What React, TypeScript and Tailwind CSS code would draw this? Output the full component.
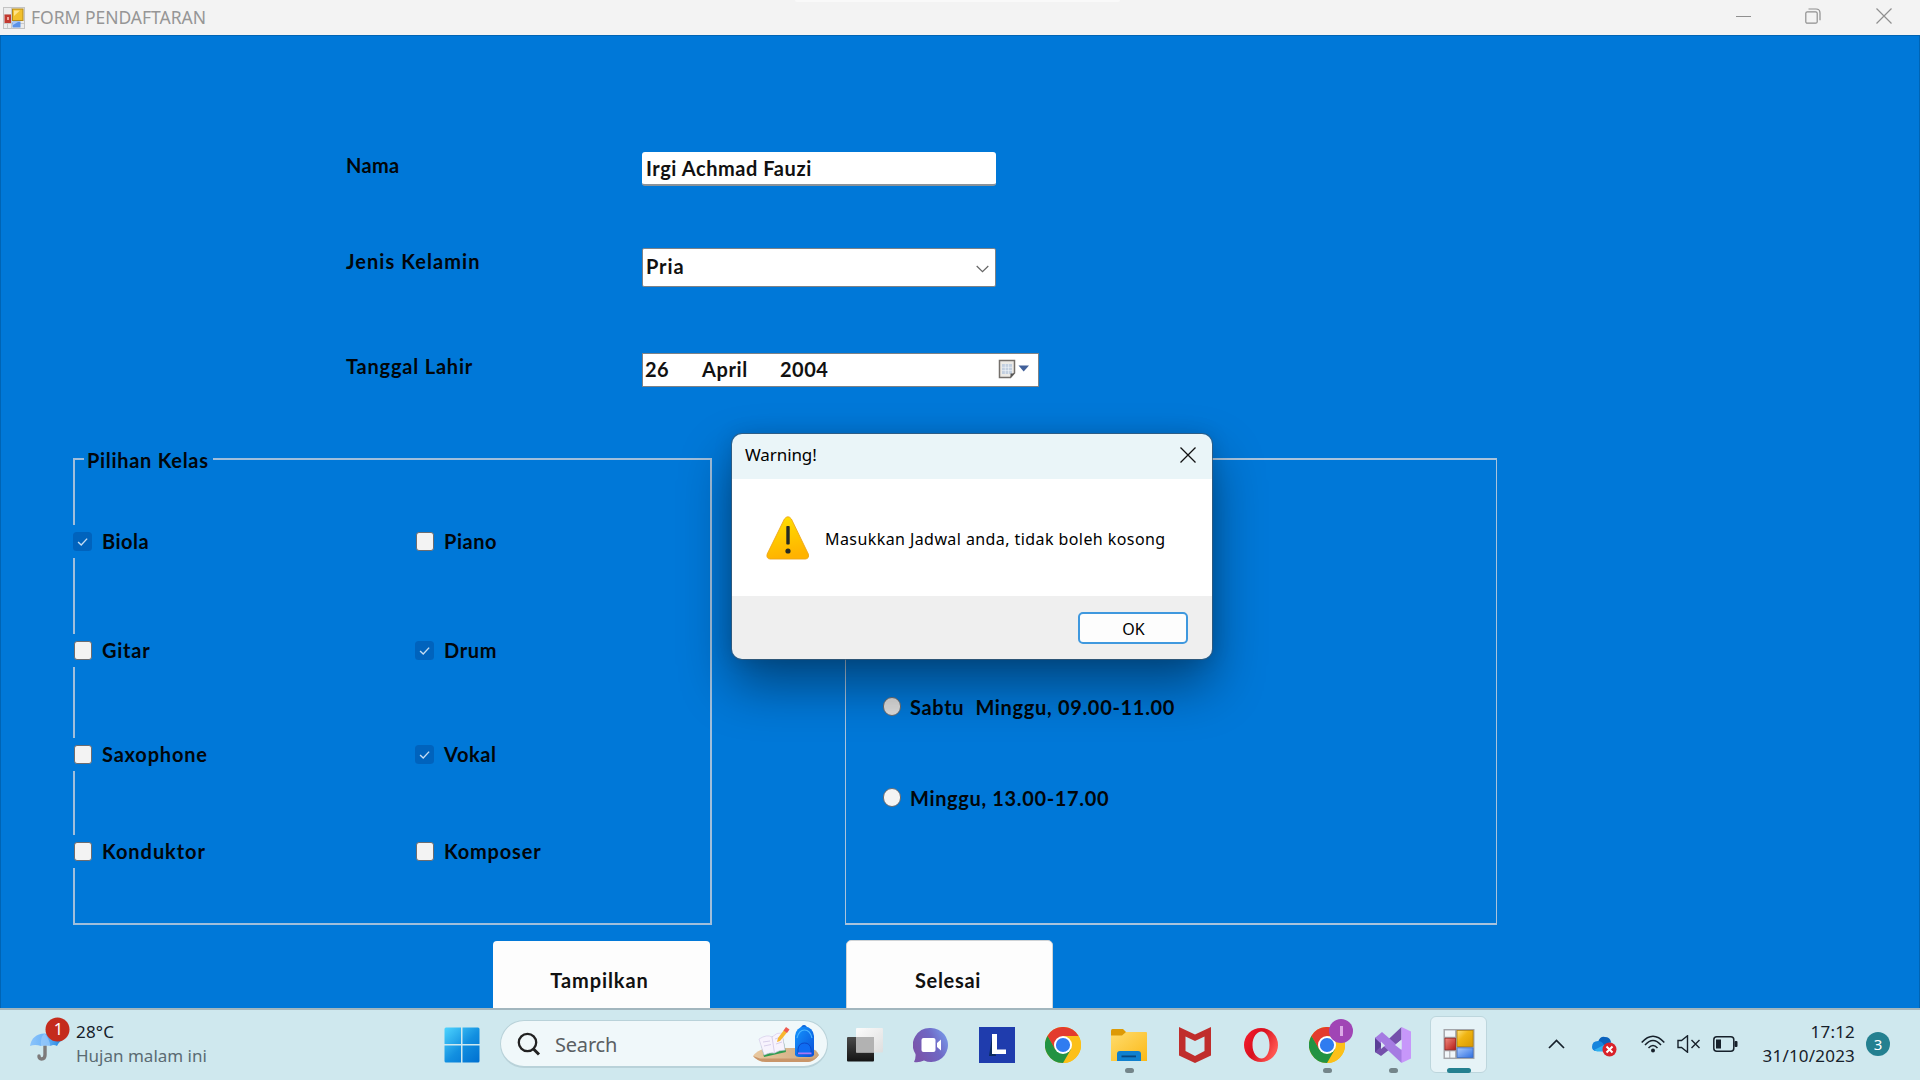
import type { ReactNode } from "react";

function FormsIcon({ className }: { className: string }) {
  return (
    <svg viewBox="0 0 32 32" className={className}>
      <defs>
        <linearGradient id="fy" x1="0" y1="0" x2="1" y2="1"><stop offset="0" stopColor="#ffe27a" /><stop offset="0.4" stopColor="#f0b512" /><stop offset="1" stopColor="#d99800" /></linearGradient>
        <linearGradient id="fr" x1="0" y1="0" x2="1" y2="1"><stop offset="0" stopColor="#f08a80" /><stop offset="1" stopColor="#b41a14" /></linearGradient>
        <linearGradient id="fb" x1="0" y1="0" x2="1" y2="1"><stop offset="0" stopColor="#a9cbff" /><stop offset="1" stopColor="#2f6fe0" /></linearGradient>
      </defs>
      <rect x="0" y="0" width="32" height="31" fill="#a3a5aa" />
      <rect x="1.5" y="1.5" width="10.5" height="6.5" fill="#f1f6f9" />
      <rect x="1.5" y="23" width="4.5" height="6.5" fill="#f1f6f9" />
      <rect x="7" y="23" width="5" height="6.5" fill="#f1f6f9" />
      <rect x="1.5" y="9.5" width="11" height="12" fill="url(#fr)" stroke="#9c2420" strokeWidth="0.8" />
      <rect x="14" y="1.5" width="16.5" height="16.5" fill="url(#fy)" stroke="#b88308" strokeWidth="0.8" />
      <rect x="14" y="19.5" width="16.5" height="10" fill="url(#fb)" stroke="#3c6cc0" strokeWidth="0.8" />
    </svg>
  );
}

function TitleIcon() {
  return (
    <svg viewBox="0 0 22 22" className="ml-[3px] size-[22px]">
      <rect x="0.5" y="0.5" width="21" height="21" fill="#ececec" stroke="#c3c3c3" />
      <path d="M8.500 1V21M1 8H8.500M1 16.500H21M4.500 16.500V21" stroke="#c9c9c9" />
      <rect x="1.500" y="7.500" width="6.500" height="8.500" fill="#c2392f" /><rect x="4" y="10" width="2" height="3" fill="#f0a79c" />
      <rect x="9.500" y="2" width="10.500" height="11.500" fill="#f2c02c" stroke="#b58a18" /><path d="M11 3.500H17L11 9Z" fill="#ffe48a" />
      <rect x="9.500" y="14.500" width="8" height="6" fill="#5b92e6" /><path d="M10 15H15L10 18Z" fill="#a9c9f7" />
    </svg>
  );
}

function Chrome() {
  return (
    <svg viewBox="0 0 36 36" className="size-9">
      <circle cx="18" cy="18" r="18" fill="#fbbc05" />
      <path d="M18 18 L2.4 9 A18 18 0 0 1 33.6 9 Z" fill="#e33b2e" />
      <path d="M18 9 H33.6 A18 18 0 0 1 18 36 L25.8 22.5 Z" fill="#fcc018" />
      <path d="M2.4 9 A18 18 0 0 0 18 36 L25.8 22.5 L18 18 L10.2 22.5 Z" fill="#229342" />
      <path d="M2.4 9 L10.2 22.5 L18 18 V9 Z" fill="#e33b2e" />
      <path d="M2.4 9 L10.2 22.5 L9 27 L2 18Z" fill="#229342" />
      <circle cx="18" cy="18" r="9" fill="#fff" />
      <circle cx="18" cy="18" r="7.1" fill="#2f7cf0" />
    </svg>
  );
}

function Check({ label, on, className }: { label: string; on?: boolean; className: string }) {
  return (
    <label className="flex h-[33px] items-center bg-[#0078d8]">
      {on ? (
        <svg viewBox="0 0 18 19" className="h-[19px] w-[19px]" preserveAspectRatio="none">
          <rect width="18" height="19" rx="3.5" fill="#0063bd" />
          <path d="M4.8 10 L7.8 13 L13.4 6.6" fill="none" stroke="#c5dcf2" strokeWidth="1.3" />
        </svg>
      ) : (
        <span className="mx-[0.5px] h-[19px] w-[18px] rounded-[3px] border border-[#6c6c70] bg-[#f3f3f3]" />
      )}
      <span className={`ml-[10px] whitespace-nowrap pb-[2px] ${className}`}>{label}</span>
    </label>
  );
}

function Radio({ label, fill, className }: { label: string; fill: string; className: string }) {
  return (
    <label className="flex h-8 items-center">
      <span className={`mt-[2px] h-[19px] w-[18px] rounded-full border border-[#666a70] ${fill}`} />
      <span className={`ml-[9px] whitespace-pre pt-[3px] ${className}`}>{label}</span>
    </label>
  );
}

function TaskIcon({ children, mark }: { children: ReactNode; mark?: boolean }) {
  return (
    <div className="relative flex h-14 w-[66px] items-center justify-center pb-px">
      {children}
      {mark && <span className="absolute bottom-0 h-[5px] w-[9px] rounded-full bg-[#74858a]" />}
    </div>
  );
}

function Dialog() {
  return (
    <section className="absolute left-[732px] top-[434px] flex h-[225px] w-[480px] flex-col overflow-hidden rounded-[10px] font-['Noto_Sans',sans-serif] text-black shadow-[0_0_0_1px_rgba(60,90,115,0.75),0_26px_52px_rgba(0,0,0,0.42),0_0_20px_rgba(0,0,0,0.12)]">
      <header className="flex h-[45px] items-center justify-between bg-[#eaf5f8] pb-[3px] pl-[13px] pr-[16px]">
        <span className="text-[17px] leading-6 tracking-[-0.1px]">Warning!</span>
        <svg viewBox="0 0 16 16" className="size-4"><path d="M.5 .5 15.5 15.5M15.5 .5 .5 15.5" stroke="#111" strokeWidth="1.3" /></svg>
      </header>
      <div className="flex h-[117px] items-center bg-white pl-[34px]">
        <svg viewBox="0 0 44 44" className="size-11">
          <defs><linearGradient id="wg" x1="0" y1="0" x2="0.2" y2="1"><stop offset="0" stopColor="#ffe100" /><stop offset="1" stopColor="#ffb300" /></linearGradient></defs>
          <path d="M18.4 3 Q22 -1.5 25.4 3 L42.3 38 Q43.5 42.5 39.5 43 H4 Q0 42.5 1.2 38 Z" fill="url(#wg)" stroke="#eda61a" strokeWidth="0.9" />
          <rect x="20.3" y="10" width="3.4" height="18.5" rx="0.8" fill="#252a24" />
          <circle cx="22" cy="35" r="2.6" fill="#252a24" />
        </svg>
        <span className="ml-[15px] mt-[2px] whitespace-nowrap text-[16px] leading-6 tracking-[0.42px]">Masukkan Jadwal anda, tidak boleh kosong</span>
      </div>
      <footer className="flex flex-1 items-start justify-end bg-[#efefef] pr-6 pt-4">
        <button className="flex h-8 w-[110px] items-center justify-center rounded-[5px] border-2 border-[#3f98de] bg-[#fdfdfd] pl-px pt-[2px] text-[16px]">OK</button>
      </footer>
    </section>
  );
}

export default function App() {
  return (
    <div className="relative flex h-[1080px] w-[1920px] flex-col overflow-hidden bg-[#0078d8] font-['Lato',sans-serif]">
      <header className="relative flex h-[35px] shrink-0 items-center bg-[#f3f3f3]">
        <span className="absolute left-[795px] top-0 h-[2px] w-[325px] rounded-b-full bg-[#f9f9f9]" />
        <TitleIcon />
        <span className="ml-[6px] font-['Noto_Sans',sans-serif] text-[17.5px] tracking-[-0.03px] text-[#969696]">FORM PENDAFTARAN</span>
        <div className="ml-auto flex items-center pb-[3px] pr-[28px]">
          <span className="mr-[54px] h-px w-[15px] bg-[#8f8f8f]" />
          <svg viewBox="0 0 16 16" className="mr-[55px] size-4" fill="none" stroke="#8f8f8f" strokeWidth="1.2"><rect x="0.8" y="3.8" width="11.4" height="11.4" rx="1.5" /><path d="M3.5 1 H11 Q15 1 15 5 V12.3" /></svg>
          <svg viewBox="0 0 16 16" className="size-4"><path d="M.5 .5 15.5 15.5M15.5 .5 .5 15.5" stroke="#8f8f8f" strokeWidth="1.2" /></svg>
        </div>
      </header>

      <main className="flex h-[973px] shrink-0 flex-col overflow-hidden border-x border-t border-[#0064b4] pt-[116px] text-[20px] font-bold leading-6 text-[#02060a]">
        <div className="ml-[345px] flex h-[34px] items-start">
          <span className="w-[296px] pt-px tracking-[0.3px]">Nama</span>
          <div className="flex h-[34px] w-[354px] items-center rounded-[3px] border-b-2 border-[#8a9299] bg-white pl-[4px] tracking-[0.56px] text-[#111]">Irgi Achmad Fauzi</div>
        </div>
        <div className="ml-[345px] mt-[62px] flex h-[39px] items-start">
          <span className="w-[296px] pt-px tracking-[1.05px]">Jenis Kelamin</span>
          <div className="flex h-[39px] w-[354px] items-center justify-between rounded-[2px] border border-[#7d8287] bg-white pl-[3px] pr-[6px] text-[#111]">
            <span className="pb-1 tracking-[0.9px]">Pria</span>
            <svg viewBox="0 0 13 8" className="mt-[2px] h-2 w-[13px]"><path d="M.7 1 6.5 6.7 12.3 1" fill="none" stroke="#666" strokeWidth="1.2" /></svg>
          </div>
        </div>
        <div className="ml-[345px] mt-[66px] flex h-[34px] items-start">
          <span className="w-[296px] pt-px tracking-[0.8px]">Tanggal Lahir</span>
          <div className="flex h-[34px] w-[397px] items-center border border-[#7d8287] bg-white pb-[2px] pl-[2px] text-[#111]">
            <span className="w-[57px] tracking-[0.3px]">26</span>
            <span className="w-[78px] tracking-[0.6px]">April</span>
            <span className="tracking-[0.5px]">2004</span>
            <svg viewBox="0 0 32 20" className="ml-auto mr-[8px] h-5 w-8">
              <path d="M1.5 1.5 H16.5 V14 L12.5 18.5 H1.5 Z" fill="#eceae6" stroke="#74706c" strokeWidth="1.5" />
              <rect x="4" y="5" width="10" height="10" fill="#c2cfdf" />
              <path d="M4 8.3H14M4 11.6H14M7.3 5V15M10.6 5V15" stroke="#f3f6fa" strokeWidth="0.6" />
              <path d="M12.5 18.5 V14.5 H16.5 Z" fill="#555" />
              <path d="M20.5 6.5 H31 L25.7 12.5 Z" fill="#41609a" />
            </svg>
          </div>
        </div>

        <div className="ml-[72px] mt-[71px] flex shrink-0">
          <fieldset className="relative h-[467px] w-[639px] border-2 border-[#a0bedb]">
            <span className="absolute left-[9px] top-[-12px] whitespace-nowrap bg-[#0078d8] pl-[3px] pr-[4px] tracking-[0.7px]">Pilihan Kelas</span>
            <div className="-ml-[2px] grid grid-cols-[342px_200px] pt-[65px]">
              <Check label="Biola" on className="tracking-[0.5px]" />
              <Check label="Piano" className="tracking-[0.55px]" />
              <div className="col-span-2 mt-[76px] grid grid-cols-subgrid">
                <Check label="Gitar" className="tracking-[0.75px]" />
                <Check label="Drum" on className="tracking-[0.65px]" />
              </div>
              <div className="col-span-2 mt-[71px] grid grid-cols-subgrid">
                <Check label="Saxophone" className="tracking-[0.8px]" />
                <Check label="Vokal" on className="tracking-[0.6px]" />
              </div>
              <div className="col-span-2 mt-[64px] grid grid-cols-subgrid">
                <Check label="Konduktor" className="tracking-[0.95px]" />
                <Check label="Komposer" className="tracking-[0.8px]" />
              </div>
            </div>
          </fieldset>
          <fieldset className="ml-[133px] h-[467px] w-[652px] border-x border-y-2 border-[#a9c3dc] pl-[37px] pt-[229px]">
            <Radio label="Sabtu  Minggu, 09.00-11.00" fill="bg-[#dcdcdc]" className="tracking-[0.68px]" />
            <div className="mt-[59px]"><Radio label="Minggu, 13.00-17.00" fill="bg-[#f4f4f4]" className="tracking-[0.65px]" /></div>
          </fieldset>
        </div>
        <div className="ml-[492px] mt-[15px] flex shrink-0 items-start">
          <button className="mt-px h-[80px] w-[217px] rounded-[4px] bg-[#fdfdfd] pb-[2px] pr-[4px] tracking-[0.9px] text-[#111]">Tampilkan</button>
          <button className="ml-[136px] h-[81px] w-[207px] rounded-[5px] border border-[#cfd3d6] bg-[#fdfdfd] pb-[2px] pr-[3px] tracking-[0.7px] text-[#111]">Selesai</button>
        </div>
      </main>

      <footer className="flex h-[72px] shrink-0 items-start border-t-2 border-[#a2b6be] bg-[#cfe8ee] font-['Noto_Sans',sans-serif] text-[#16202a]">
        <div className="flex h-full w-[443px] pl-[28px]">
          <svg viewBox="0 0 44 48" className="mt-[5px] h-12 w-11">
            <defs><linearGradient id="ug" x1="0" y1="0" x2="1" y2="0"><stop offset="0" stopColor="#8cc4fb" /><stop offset="0.5" stopColor="#6bb2f8" /><stop offset="1" stopColor="#1d86e0" /></linearGradient></defs>
            <path d="M17 28 V40 Q17 44 13.5 44 Q11 44 11 41" fill="none" stroke="#7d7a7a" strokeWidth="3.4" strokeLinecap="round" />
            <path d="M2 31 Q4 19 16.5 18.5 Q31 19 34 26 Q31.500 26 29 31 Q25.500 29 22.500 31 Q17 29 13 31 Q7 29 2 31Z" fill="url(#ug)" />
            <path d="M13 31 Q12 22 16.500 18.500 Q21 23 22.500 31" fill="#9dccfb" opacity="0.7" />
            <circle cx="29.500" cy="14.500" r="12" fill="#c42b1c" />
            <text x="30.500" y="20" textAnchor="middle" fontSize="16.500" fill="#fff">1</text>
          </svg>
          <div className="ml-[4px] pt-[10px] text-[17px] leading-6">
            <div className="tracking-[0.2px]">28°C</div>
            <div className="text-[#5b6b72]">Hujan malam ini</div>
          </div>
        </div>
        <svg viewBox="0 0 36 36" className="ml-px mt-[17px] size-9 shrink-0">
          <defs><linearGradient id="win" gradientUnits="userSpaceOnUse" x1="0" y1="0" x2="34" y2="36"><stop offset="0" stopColor="#4fd6ff" /><stop offset="0.55" stopColor="#128fe0" /><stop offset="1" stopColor="#0070d0" /></linearGradient></defs>
          <path d="M2 .5H17V17H.5V2Q.5 .5 2 .5ZM18.500 .5H34Q35.500 .5 35.500 2V17H18.500ZM.5 18.500H17V35.500H2Q.5 35.500 .5 34ZM18.500 18.500H35.500V34Q35.500 35.500 34 35.500H18.500Z" fill="url(#win)" />
        </svg>
        <div className="ml-[20px] mt-[10px] flex h-[48px] w-[328px] shrink-0 items-center rounded-full border-[1.5px] border-b-2 border-[#b9d2d9] bg-[#f0f8fa] pl-[16px] pr-[7px]">
          <svg viewBox="0 0 24 24" className="size-6" fill="none" stroke="#222" strokeWidth="2.3"><circle cx="10.500" cy="10.500" r="8.700" /><path d="M16.500 17 22 22.500" strokeWidth="3" /></svg>
          <span className="ml-[14px] mt-[2px] text-[20px] tracking-[-0.2px] text-[#5a5f62]">Search</span>
          <svg viewBox="0 0 68 40" className="ml-auto h-10 w-[68px]">
            <defs>
              <linearGradient id="sand" x1="0" y1="0" x2="1" y2="0"><stop offset="0" stopColor="#e9c9a0" /><stop offset="1" stopColor="#cba67c" /></linearGradient>
              <linearGradient id="bag" x1="0" y1="0" x2="1" y2="1"><stop offset="0" stopColor="#1496ff" /><stop offset="1" stopColor="#0a50d8" /></linearGradient>
            </defs>
            <path d="M1 32 Q6 25 16 24 H56 Q65 25 67 31 Q62 38 56 38 H14 Q6 38 1 32Z" fill="url(#sand)" />
            <path d="M1 32 Q6 38 14 38 H56 Q62 37 67 31 L62 34.500 H8Z" fill="#c9966a" />
            <path d="M8 16 30 10 34 28 12 33Z" fill="#2f9c50" />
            <path d="M7 15 Q15 10 20 13 Q25 8 30 9 L33 26 Q27 26 22.500 29 Q18 28 12 31Z" fill="#f7f3fd" stroke="#d5cdea" strokeWidth="0.7" />
            <path d="M20 13 22.500 29M11 18 18 17M12 22 19 20.500M23 15 29 13M24 20 30 18" stroke="#cfc5e4" strokeWidth="0.8" />
            <path d="M25 18 26 14 32 6 35 8.500 28 17Z" fill="#f7b72f" /><path d="M31.500 6.500 34 3 37.500 5.500 35 9Z" fill="#ef5a50" />
            <path d="M48 7 Q52 -3 56 7" fill="none" stroke="#0a62d8" strokeWidth="2" />
            <path d="M43 31 V12 Q44 3 52.500 2.500 Q61 3 62 12 V31 Q61 33 58 33 H47 Q44 33 43 31Z" fill="url(#bag)" />
            <path d="M45 14 Q47 6 52.500 6 Q58 6 60 14" stroke="#49b4ff" strokeWidth="1.200" fill="none" />
            <path d="M46 30 V25 Q47 19 52.500 19 Q58 19 59 25 V30Z" fill="#0f6cf2" stroke="#0b48c8" strokeWidth="1" /><rect x="46" y="28.500" width="13.500" height="1.800" fill="#a978f5" />
          </svg>
        </div>
        <div className="ml-[4px] mt-[7px] flex shrink-0">
          <TaskIcon>
            <svg viewBox="0 0 36 36" className="size-9">
              <defs>
                <linearGradient id="tb" x1="0" y1="0" x2="0" y2="1"><stop offset="0" stopColor="#4a4a4a" /><stop offset="1" stopColor="#141414" /></linearGradient>
                <linearGradient id="tw" x1="0" y1="0" x2="1" y2="1"><stop offset="0" stopColor="#fcfcfc" /><stop offset="1" stopColor="#dedede" /></linearGradient>
              </defs>
              <rect x="0" y="10" width="27" height="24.500" rx="1" fill="url(#tb)" />
              <rect x="9" y="1" width="27" height="24.500" rx="1" fill="url(#tw)" /><rect x="9" y="10" width="18" height="15.500" fill="#b2b2b2" />
            </svg>
          </TaskIcon>
          <TaskIcon>
            <svg viewBox="0 0 36 36" className="size-9">
              <defs><linearGradient id="cg" x1="0" y1="0.5" x2="1" y2="0"><stop offset="0" stopColor="#7a55ac" /><stop offset="0.5" stopColor="#6f67c4" /><stop offset="1" stopColor="#7aa5f2" /></linearGradient></defs>
              <path d="M18 1 A17 17 0 1 1 11 33.500 Q6 36 1 35 Q3 31 2.500 27 A17 17 0 0 1 18 1Z" fill="url(#cg)" />
              <rect x="8.500" y="11" width="14" height="14" rx="2" fill="#fff" /><path d="M24 16 28 12.500V23.500L24 20Z" fill="#fff" />
            </svg>
          </TaskIcon>
          <TaskIcon>
            <svg viewBox="0 0 36 36" className="size-9"><rect width="36" height="36" fill="#1f3cad" /><path d="M13 10 10 29H17Z" fill="#0a2b60" /><path d="M13 7H18V22.500H27V27H13Z" fill="#fff" /></svg>
          </TaskIcon>
          <TaskIcon><Chrome /></TaskIcon>
          <TaskIcon mark>
            <svg viewBox="0 0 36 36" className="size-9">
              <defs><linearGradient id="fg" x1="0" y1="0" x2="1" y2="1"><stop offset="0" stopColor="#ffdc6e" /><stop offset="1" stopColor="#fbb917" /></linearGradient></defs>
              <path d="M0 3.500Q0 2 1.500 2H12L15 5V9H0Z" fill="#dd9a06" /><path d="M0 8.500H11L15 5H35Q36 5 36 6V34H0Z" fill="url(#fg)" />
              <path d="M6 34V27Q6 24 9 24H27Q30 24 30 27V34Z" fill="#0f80cf" /><rect x="10.500" y="28.500" width="14.500" height="1.800" fill="#07467f" />
            </svg>
          </TaskIcon>
          <TaskIcon>
            <svg viewBox="0 0 36 36" className="size-9"><path d="M2 0 18 7.500 34 0V28.500L18 36 2 28.500ZM8.500 9.500V24L18 29 27.500 24V9.500L18 14Z" fill="#c02d2c" fillRule="evenodd" /></svg>
          </TaskIcon>
          <TaskIcon>
            <svg viewBox="0 0 36 36" className="size-9">
              <defs><linearGradient id="og" x1="0" y1="0" x2="1" y2="0.5"><stop offset="0" stopColor="#fa1e30" /><stop offset="0.5" stopColor="#d8101e" /><stop offset="1" stopColor="#ff5550" /></linearGradient></defs>
              <path d="M18 1A17 17 0 1 0 18 35A17 17 0 1 0 18 1ZM18.500 4.500C23 4.500 26.500 10 26.500 18S23 31.500 18.500 31.500S9.500 26 9.500 18S14 4.500 18.500 4.500Z" fill="url(#og)" fillRule="evenodd" />
            </svg>
          </TaskIcon>
          <TaskIcon mark>
            <Chrome />
            <span className="absolute right-[7px] top-[2px] flex size-6 items-center justify-center rounded-full bg-[#a045b5]"><span className="h-[10px] w-[3px] bg-[#dba9e6]" /></span>
          </TaskIcon>
          <TaskIcon mark>
            <svg viewBox="0 0 36 36" className="size-9">
              <path d="M0 11 6 7.500V28L0 25Z" fill="#5b3f96" /><path d="M6 29 0 25 26.500 0V13Z" fill="#7450ab" />
              <path d="M0 11 7 5 30 25 26.500 36Z" fill="#a57be2" /><path d="M26.500 0 36 4.500V31.500L26.500 36Z" fill="#c797fa" /><path d="M6 14.500V22L10 18.500Z" fill="#d9e7f2" /><path d="M26.500 12.500V23L20 18Z" fill="#d9e7f2" />
            </svg>
          </TaskIcon>
          <div className="relative ml-[4px] mt-[-1px] flex size-[57px] items-center justify-center self-start rounded-[6px] border border-[#bdd6dd] bg-[#e6f3f7]">
            <FormsIcon className="h-[31px] w-8" />
            <span className="absolute bottom-[-1px] h-[5px] w-6 rounded-full bg-[#248090]" />
          </div>
        </div>
        <div className="ml-auto flex h-[70px] shrink-0 items-center pb-[2px] pr-[30px]">
          <svg viewBox="0 0 17 10" className="mr-[27px] h-[10px] w-[17px]"><path d="M1 9 8.500 1.500 16 9" fill="none" stroke="#16202a" strokeWidth="1.700" /></svg>
          <svg viewBox="0 0 25 21" className="mr-[24px] mt-1 h-[21px] w-[25px]">
            <path d="M1 13Q0 7 6 6Q8 0 13 1Q18 1 19 6L12 15H5Q2 15 1 13Z" fill="#0a62bd" /><path d="M0 11Q0 5 6 5Q10 5 12 9L18 6Q22 7 20 15H5Q0 15 0 11Z" fill="#1685dd" /><path d="M2 14 12 9 17 15.500H5Z" fill="#2fb0f0" />
            <circle cx="17.500" cy="13.500" r="7" fill="#d9222a" /><path d="M14.500 10.500 20.500 16.500M20.500 10.500 14.500 16.500" stroke="#fff" strokeWidth="2" />
          </svg>
          <svg viewBox="0 0 24 18" className="mr-[12px] h-[18px] w-6" fill="none" stroke="#16202a" strokeWidth="1.500"><path d="M.7 7.500Q12 -5 23.300 7.500M4 10Q12 1 20 10M7.500 13Q12 8 16.500 13" /><circle cx="12" cy="15.500" r="2" fill="#16202a" stroke="none" /></svg>
          <svg viewBox="0 0 24 18" className="mr-[12px] h-[18px] w-6" fill="none" stroke="#16202a" strokeWidth="1.400"><path d="M1 5.500H4.500L10.500 .8V17.200L4.500 12.500H1ZM14.500 5 22.500 13M22.500 5 14.500 13" /></svg>
          <svg viewBox="0 0 25 16" className="mr-[24px] h-4 w-[25px]"><rect x=".8" y=".8" width="20" height="14.400" rx="3" fill="none" stroke="#16202a" strokeWidth="1.500" /><rect x="3" y="3.500" width="5" height="9" fill="#16202a" /><rect x="21.500" y="5" width="3" height="6" rx="1" fill="#16202a" /></svg>
          <div className="w-[93px] whitespace-nowrap text-right text-[17px] leading-6 tracking-[0.2px]"><div>17:12</div><div>31/10/2023</div></div>
          <span className="ml-[11px] flex size-6 items-center justify-center rounded-full bg-[#248090] text-[15px] text-white">3</span>
        </div>
      </footer>

      <Dialog />
    </div>
  );
}
